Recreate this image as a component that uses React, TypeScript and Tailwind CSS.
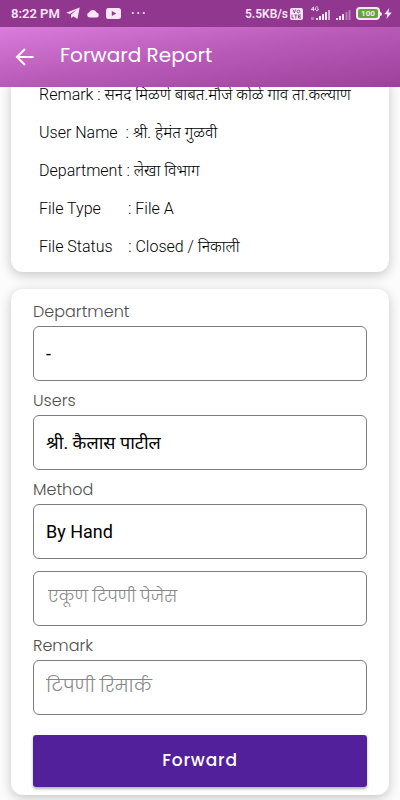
import React from "react";

const details = [
  "Remark : सनद मिळणे बाबत.मौजे कोळे गाव ता.कल्याण",
  "User Name  : श्री. हेमंत गुळवी",
  "Department : लेखा विभाग",
  "File Type       : File A",
  "File Status    : Closed / निकाली",
];

const labelClass = "block pt-2 pb-[2px] text-base leading-6 font-light text-[#4f4f4f] font-['Poppins','Inter',sans-serif]";
const boxClass = "block h-[55px] w-full appearance-none rounded-md border border-[#7d7d7d] bg-white px-3 outline-none";
const placeholderClass = "pb-1 font-light font-['Poppins','Noto_Sans',sans-serif] placeholder:text-[#858585]";
const cardShadow = "shadow-[0_3px_12px_rgba(0,0,0,0.22)]";

function StatusBar() {
  return (
    <div className="flex h-[27px] items-center justify-between bg-[#91378f] pr-2 pl-[11px] text-xs font-semibold text-[#fbe6fb]">
      <div className="flex items-center gap-[6px]">
        <span className="text-[13px]">8:22 PM</span>
        <svg width="14" height="13" viewBox="0 0 14 13" fill="currentColor" aria-hidden="true">
          <path d="M13.7.4 11.4 12 7.2 9.2 5.3 11.2 4.9 7.7 11 2.6 3.8 7 .2 5.8Z" />
        </svg>
        <svg width="14" height="9" viewBox="0 0 13 9" fill="currentColor" aria-hidden="true">
          <path d="M3 8.5A2.7 2.7 0 0 1 2.8 3.2 4 4 0 0 1 10.1 3.6 2.5 2.5 0 0 1 10.4 8.5Z" />
        </svg>
        <svg width="15" height="11" viewBox="0 0 15 11" aria-hidden="true">
          <rect width="15" height="11" rx="2.5" fill="currentColor" />
          <path d="M5.8 2.9v5.2l4.4-2.6Z" fill="#91378f" />
        </svg>
        <svg className="ml-1" width="15" height="4" viewBox="0 0 15 4" fill="currentColor" aria-hidden="true">
          <circle cx="1.8" cy="2" r="1.1" />
          <circle cx="7.3" cy="2" r="1.1" />
          <circle cx="12.8" cy="2" r="1.1" />
        </svg>
      </div>
      <div className="flex items-center">
        <span>5.5KB/s</span>
        <svg className="ml-[2px]" width="13" height="12" viewBox="0 0 13 12" aria-hidden="true">
          <rect width="13" height="12" rx="2" fill="currentColor" />
          <g fill="none" stroke="#91378f" strokeWidth="0.9">
            <path d="m3 1.5 1.3 3.5 1.3-3.5" />
            <circle cx="8.5" cy="3.5" r="1.3" />
            <path d="M2 6.5V10h2M4.3 7h3M5.8 7v3.5M11 7H8.5v3H11M8.5 8.5h2" />
          </g>
        </svg>
        <svg className="ml-[7px]" width="21" height="16" viewBox="0 0 21 16" aria-hidden="true">
          <g fill="none" stroke="currentColor" strokeWidth="0.9">
            <path d="M3.5 5V.8L1.2 3.6h3.1M8.2 1.5C7 .2 5.4.9 5.4 2.8s1.7 2.5 2.8 1.3V2.9H7" />
          </g>
          <g fill="currentColor">
            <path d="M1 11h3v3H1Z" opacity=".35" />
            <path d="M6 12h2v2H6ZM9 10h2v4H9ZM12 8h2v6h-2ZM15 6h2v8h-2Z" />
            <path d="M18 4h2v10h-2Z" opacity=".65" />
          </g>
        </svg>
        <svg className="ml-1" width="16" height="16" viewBox="0 0 16 16" fill="currentColor" aria-hidden="true">
          <path d="M1 12h2v2H1ZM4 10h2v4H4ZM7 8h2v6H7Z" />
          <path d="M10.5 6h2v8h-2ZM13.5 4h2v10h-2Z" opacity=".4" />
        </svg>
        <div className="ml-[5px] flex h-[13px] w-6 items-center justify-center rounded-[4px] border-2 border-current bg-[#62a63a] text-[8px] leading-none font-bold">
          100
        </div>
        <div className="h-1 w-[2px] rounded-r-sm bg-current" />
        <svg className="ml-[2px]" width="8" height="11" viewBox="0 0 8 11" fill="currentColor" aria-hidden="true">
          <path d="M5.3 0 .3 6.2h3L2.5 11l5.2-6.4H4.4Z" />
        </svg>
      </div>
    </div>
  );
}

function SelectField({ id, label, value }: { id: string; label: string; value: string }) {
  return (
    <div>
      <label htmlFor={id} className={labelClass}>{label}</label>
      <select id={id} defaultValue={value} className={`${boxClass} text-lg text-black`}>
        <option>{value}</option>
      </select>
    </div>
  );
}

export default function App() {
  return (
    <div className="min-h-screen overflow-hidden bg-[#fcfcfc] pb-[5px] font-['Roboto','Noto_Sans_Devanagari','Noto_Sans',sans-serif] text-black">
      <div className="relative z-10">
        <StatusBar />
        <header className="flex h-[60px] items-center bg-linear-to-br from-[#d97cdb] via-[#b859b7] to-[#9c419b] pb-1 pl-[15px] text-white">
          <button type="button" aria-label="Back" className="mt-1">
            <svg width="20" height="20" viewBox="0 0 20 20" fill="none" stroke="currentColor" strokeWidth="2" aria-hidden="true">
              <path d="M18.5 10H2.5M10 2 2 10l8 8" />
            </svg>
          </button>
          <h1 className="ml-[25px] text-xl leading-7 font-['Poppins','Inter',sans-serif]">Forward Report</h1>
        </header>
      </div>

      <main className="mx-[11px] -mt-[11px]">
        <section className={`rounded-xl bg-white px-7 pb-[6px] ${cardShadow}`}>
          {details.map((line) => (
            <p key={line} className="h-[38px] text-base leading-[38px] font-light whitespace-pre">{line}</p>
          ))}
        </section>

        <form className={`mt-[17px] rounded-xl bg-white px-[22px] pt-[3px] pb-2 ${cardShadow}`}>
          <SelectField id="department" label="Department" value="-" />
          <SelectField id="users" label="Users" value="श्री. कैलास पाटील" />
          <SelectField id="method" label="Method" value="By Hand" />
          <input
            type="text"
            aria-label="एकूण टिपणी पेजेस"
            placeholder="एकूण टिपणी पेजेस"
            className={`${boxClass} ${placeholderClass} mt-3 pl-[14px] text-base`}
          />
          <label htmlFor="remark" className={labelClass}>Remark</label>
          <input
            id="remark"
            type="text"
            placeholder="टिपणी रिमार्क"
            className={`${boxClass} ${placeholderClass} text-lg`}
          />
          <button
            type="button"
            className="mt-5 h-[52px] w-full rounded-[3px] bg-[#53209c] text-[17px] font-medium tracking-wider text-white shadow-[0_2px_3px_rgba(0,0,0,0.3)] font-['Poppins','Inter',sans-serif]"
          >
            Forward
          </button>
        </form>
      </main>
    </div>
  );
}
